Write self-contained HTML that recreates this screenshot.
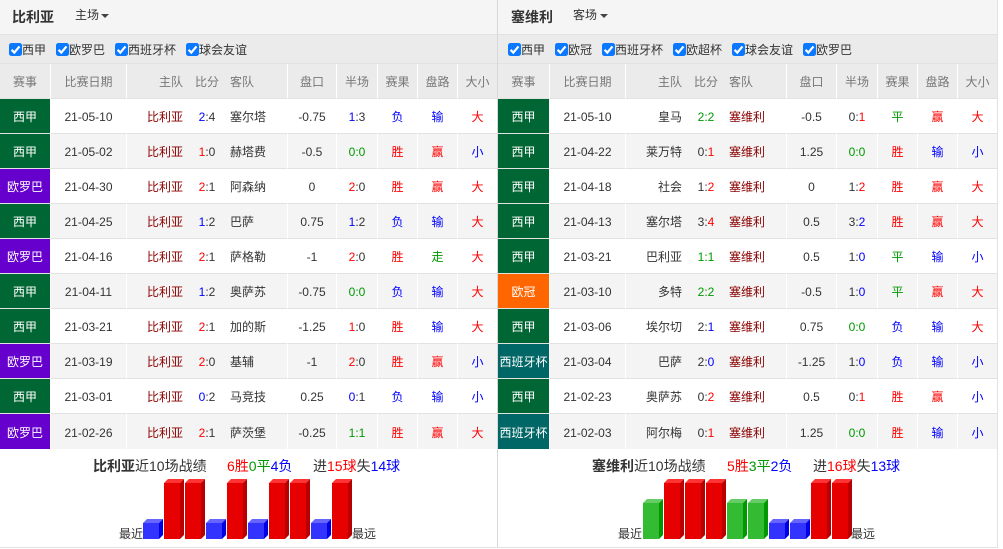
<!DOCTYPE html>
<html lang="zh-CN">
<head>
<meta charset="utf-8">
<title>近10场战绩</title>
<style>
html,body{margin:0;padding:0;background:#fff;}
body{width:1003px;height:549px;position:relative;overflow:hidden;font:12px/1 "Liberation Sans","Noto Sans CJK SC",sans-serif;color:#333;}
.abs{position:absolute;white-space:nowrap;}
.bg{position:absolute;}
table{position:absolute;top:64px;border-collapse:separate;border-spacing:0;table-layout:fixed;}
th,td{height:35px;box-sizing:border-box;padding:2px 0 0;text-align:center;font-weight:normal;border-bottom:1px solid #e2e2e2;white-space:nowrap;overflow:hidden;}
th{background:#ebebeb;color:#777;border-bottom-color:#e2e2e2;font-size:12px;}
.s{border-right:1px solid #fff;}
tr.e td{background:#f4f4f4;}
tr.l td{border-bottom:0;}
td.c{color:#fff;}
tr td.gr{background:#006633;}
tr td.pu{background:#6600cc;}
tr td.or{background:#ff6600;}
tr td.te{background:#006666;}
th.h,td.h{text-align:right;padding-right:12px;}
th.v,td.v{text-align:left;padding-left:11px;}
.t{color:#8b0000;}
.r{color:#f00;}
.b{color:#00f;}
.g{color:#090;}
.cb{position:absolute;top:43px;width:13px;height:13px;}
.lb{top:44px;color:#333;font-size:12px;}
.ti{font-size:14px;font-weight:bold;top:10px;color:#333;}
.sum{font-size:14px;top:459px;color:#333;}
.car{position:absolute;top:14px;width:0;height:0;border-left:4px solid transparent;border-right:4px solid transparent;border-top:4px solid #444;}
</style>
</head>
<body>
<div class="bg" style="left:0;top:0;width:997px;height:34px;background:#f5f5f5"></div>
<div class="bg" style="left:0;top:34px;width:997px;height:1px;background:#e2e2e2"></div>
<div class="bg" style="left:0;top:35px;width:997px;height:28px;background:#ebebeb"></div>
<div class="bg" style="left:0;top:63px;width:997px;height:1px;background:#e2e2e2"></div>
<div class="bg" style="left:497px;top:0;width:1px;height:548px;background:#d8d8d8"></div>
<div class="bg" style="left:997px;top:0;width:1px;height:548px;background:#e2e2e2"></div>
<div class="bg" style="left:0;top:547px;width:998px;height:1px;background:#e2e2e2"></div>

<span class="abs ti" style="left:12px">比利亚</span>
<span class="abs" style="left:75px;top:9px">主场</span><i class="car" style="left:101px"></i>
<span class="abs ti" style="left:511px">塞维利</span>
<span class="abs" style="left:573px;top:9px">客场</span><i class="car" style="left:600px"></i>

<svg width="0" height="0" style="position:absolute"><defs><g id="ck"><rect width="13" height="13" rx="2.5" fill="#0a78ff"/><path d="M2.6 6.8 L5.3 9.6 L10.5 3.4" fill="none" stroke="#fff" stroke-width="2.2"/></g></defs></svg>

<svg class="cb" style="left:9px" viewBox="0 0 13 13"><use href="#ck"/></svg><span class="abs lb" style="left:22px">西甲</span>
<svg class="cb" style="left:56px" viewBox="0 0 13 13"><use href="#ck"/></svg><span class="abs lb" style="left:69px">欧罗巴</span>
<svg class="cb" style="left:115px" viewBox="0 0 13 13"><use href="#ck"/></svg><span class="abs lb" style="left:128px">西班牙杯</span>
<svg class="cb" style="left:186px" viewBox="0 0 13 13"><use href="#ck"/></svg><span class="abs lb" style="left:199px">球会友谊</span>

<svg class="cb" style="left:508px" viewBox="0 0 13 13"><use href="#ck"/></svg><span class="abs lb" style="left:521px">西甲</span>
<svg class="cb" style="left:555px" viewBox="0 0 13 13"><use href="#ck"/></svg><span class="abs lb" style="left:568px">欧冠</span>
<svg class="cb" style="left:602px" viewBox="0 0 13 13"><use href="#ck"/></svg><span class="abs lb" style="left:615px">西班牙杯</span>
<svg class="cb" style="left:673px" viewBox="0 0 13 13"><use href="#ck"/></svg><span class="abs lb" style="left:686px">欧超杯</span>
<svg class="cb" style="left:732px" viewBox="0 0 13 13"><use href="#ck"/></svg><span class="abs lb" style="left:745px">球会友谊</span>
<svg class="cb" style="left:803px" viewBox="0 0 13 13"><use href="#ck"/></svg><span class="abs lb" style="left:816px">欧罗巴</span>

<table style="left:0;width:497px">
<colgroup><col style="width:51px"><col style="width:76px"><col style="width:68px"><col style="width:24px"><col style="width:69px"><col style="width:49px"><col style="width:41px"><col style="width:40px"><col style="width:40px"><col style="width:39px"></colgroup>
<tr><th class="s">赛事</th><th class="s">比赛日期</th><th class="h">主队</th><th>比分</th><th class="v s">客队</th><th class="s">盘口</th><th class="s">半场</th><th class="s">赛果</th><th class="s">盘路</th><th>大小</th></tr>
<tr><td class="c gr s">西甲</td><td class="s">21-05-10</td><td class="h t">比利亚</td><td><span class="b">2</span>:4</td><td class="v s">塞尔塔</td><td class="s">-0.75</td><td class="s"><span class="b">1</span>:3</td><td class="s b">负</td><td class="s b">输</td><td class="r">大</td></tr>
<tr class="e"><td class="c gr s">西甲</td><td class="s">21-05-02</td><td class="h t">比利亚</td><td><span class="r">1</span>:0</td><td class="v s">赫塔费</td><td class="s">-0.5</td><td class="s g">0:0</td><td class="s r">胜</td><td class="s r">赢</td><td class="b">小</td></tr>
<tr><td class="c pu s">欧罗巴</td><td class="s">21-04-30</td><td class="h t">比利亚</td><td><span class="r">2</span>:1</td><td class="v s">阿森纳</td><td class="s">0</td><td class="s"><span class="r">2</span>:0</td><td class="s r">胜</td><td class="s r">赢</td><td class="r">大</td></tr>
<tr class="e"><td class="c gr s">西甲</td><td class="s">21-04-25</td><td class="h t">比利亚</td><td><span class="b">1</span>:2</td><td class="v s">巴萨</td><td class="s">0.75</td><td class="s"><span class="b">1</span>:2</td><td class="s b">负</td><td class="s b">输</td><td class="r">大</td></tr>
<tr><td class="c pu s">欧罗巴</td><td class="s">21-04-16</td><td class="h t">比利亚</td><td><span class="r">2</span>:1</td><td class="v s">萨格勒</td><td class="s">-1</td><td class="s"><span class="r">2</span>:0</td><td class="s r">胜</td><td class="s g">走</td><td class="r">大</td></tr>
<tr class="e"><td class="c gr s">西甲</td><td class="s">21-04-11</td><td class="h t">比利亚</td><td><span class="b">1</span>:2</td><td class="v s">奥萨苏</td><td class="s">-0.75</td><td class="s g">0:0</td><td class="s b">负</td><td class="s b">输</td><td class="r">大</td></tr>
<tr><td class="c gr s">西甲</td><td class="s">21-03-21</td><td class="h t">比利亚</td><td><span class="r">2</span>:1</td><td class="v s">加的斯</td><td class="s">-1.25</td><td class="s"><span class="r">1</span>:0</td><td class="s r">胜</td><td class="s b">输</td><td class="r">大</td></tr>
<tr class="e"><td class="c pu s">欧罗巴</td><td class="s">21-03-19</td><td class="h t">比利亚</td><td><span class="r">2</span>:0</td><td class="v s">基辅</td><td class="s">-1</td><td class="s"><span class="r">2</span>:0</td><td class="s r">胜</td><td class="s r">赢</td><td class="b">小</td></tr>
<tr><td class="c gr s">西甲</td><td class="s">21-03-01</td><td class="h t">比利亚</td><td><span class="b">0</span>:2</td><td class="v s">马竞技</td><td class="s">0.25</td><td class="s"><span class="b">0</span>:1</td><td class="s b">负</td><td class="s b">输</td><td class="b">小</td></tr>
<tr class="e l"><td class="c pu s">欧罗巴</td><td class="s">21-02-26</td><td class="h t">比利亚</td><td><span class="r">2</span>:1</td><td class="v s">萨茨堡</td><td class="s">-0.25</td><td class="s g">1:1</td><td class="s r">胜</td><td class="s r">赢</td><td class="r">大</td></tr>
</table>

<table style="left:498px;width:499px">
<colgroup><col style="width:52px"><col style="width:76px"><col style="width:68px"><col style="width:24px"><col style="width:69px"><col style="width:50px"><col style="width:41px"><col style="width:40px"><col style="width:40px"><col style="width:39px"></colgroup>
<tr><th class="s">赛事</th><th class="s">比赛日期</th><th class="h">主队</th><th>比分</th><th class="v s">客队</th><th class="s">盘口</th><th class="s">半场</th><th class="s">赛果</th><th class="s">盘路</th><th>大小</th></tr>
<tr><td class="c gr s">西甲</td><td class="s">21-05-10</td><td class="h">皇马</td><td class="g">2:2</td><td class="v s t">塞维利</td><td class="s">-0.5</td><td class="s">0:<span class="r">1</span></td><td class="s g">平</td><td class="s r">赢</td><td class="r">大</td></tr>
<tr class="e"><td class="c gr s">西甲</td><td class="s">21-04-22</td><td class="h">莱万特</td><td>0:<span class="r">1</span></td><td class="v s t">塞维利</td><td class="s">1.25</td><td class="s g">0:0</td><td class="s r">胜</td><td class="s b">输</td><td class="b">小</td></tr>
<tr><td class="c gr s">西甲</td><td class="s">21-04-18</td><td class="h">社会</td><td>1:<span class="r">2</span></td><td class="v s t">塞维利</td><td class="s">0</td><td class="s">1:<span class="r">2</span></td><td class="s r">胜</td><td class="s r">赢</td><td class="r">大</td></tr>
<tr class="e"><td class="c gr s">西甲</td><td class="s">21-04-13</td><td class="h">塞尔塔</td><td>3:<span class="r">4</span></td><td class="v s t">塞维利</td><td class="s">0.5</td><td class="s">3:<span class="b">2</span></td><td class="s r">胜</td><td class="s r">赢</td><td class="r">大</td></tr>
<tr><td class="c gr s">西甲</td><td class="s">21-03-21</td><td class="h">巴利亚</td><td class="g">1:1</td><td class="v s t">塞维利</td><td class="s">0.5</td><td class="s">1:<span class="b">0</span></td><td class="s g">平</td><td class="s b">输</td><td class="b">小</td></tr>
<tr class="e"><td class="c or s">欧冠</td><td class="s">21-03-10</td><td class="h">多特</td><td class="g">2:2</td><td class="v s t">塞维利</td><td class="s">-0.5</td><td class="s">1:<span class="b">0</span></td><td class="s g">平</td><td class="s r">赢</td><td class="r">大</td></tr>
<tr><td class="c gr s">西甲</td><td class="s">21-03-06</td><td class="h">埃尔切</td><td>2:<span class="b">1</span></td><td class="v s t">塞维利</td><td class="s">0.75</td><td class="s g">0:0</td><td class="s b">负</td><td class="s b">输</td><td class="r">大</td></tr>
<tr class="e"><td class="c te s">西班牙杯</td><td class="s">21-03-04</td><td class="h">巴萨</td><td>2:<span class="b">0</span></td><td class="v s t">塞维利</td><td class="s">-1.25</td><td class="s">1:<span class="b">0</span></td><td class="s b">负</td><td class="s b">输</td><td class="b">小</td></tr>
<tr><td class="c gr s">西甲</td><td class="s">21-02-23</td><td class="h">奥萨苏</td><td>0:<span class="r">2</span></td><td class="v s t">塞维利</td><td class="s">0.5</td><td class="s">0:<span class="r">1</span></td><td class="s r">胜</td><td class="s r">赢</td><td class="b">小</td></tr>
<tr class="e l"><td class="c te s">西班牙杯</td><td class="s">21-02-03</td><td class="h">阿尔梅</td><td>0:<span class="r">1</span></td><td class="v s t">塞维利</td><td class="s">1.25</td><td class="s g">0:0</td><td class="s r">胜</td><td class="s b">输</td><td class="b">小</td></tr>
</table>

<span class="abs sum" style="left:93px"><b>比利亚</b>近10场战绩</span>
<span class="abs sum" style="left:227px"><span class="r">6胜</span><span class="g">0平</span><span class="b">4负</span></span>
<span class="abs sum" style="left:313px">进<span class="r">15球</span>失<span class="b">14球</span></span>
<span class="abs sum" style="left:592px"><b>塞维利</b>近10场战绩</span>
<span class="abs sum" style="left:727px"><span class="r">5胜</span><span class="g">3平</span><span class="b">2负</span></span>
<span class="abs sum" style="left:813px">进<span class="r">16球</span>失<span class="b">13球</span></span>

<span class="abs" style="left:119px;top:528px">最近</span>
<span class="abs" style="left:352px;top:528px">最远</span>
<span class="abs" style="left:618px;top:528px">最近</span>
<span class="abs" style="left:851px;top:528px">最远</span>

<svg width="1003" height="549" style="position:absolute;left:0;top:0;pointer-events:none">
<defs>
<g id="B"><rect x="0" y="-16" width="16" height="16" fill="#3333ff"/><polygon points="0,-16 4,-20 20,-20 16,-16" fill="#6666ff"/><polygon points="16,-16 20,-20 20,-4 16,0" fill="#0000e6"/></g>
<g id="R"><rect x="0" y="-56" width="16" height="56" fill="#e60000"/><polygon points="0,-56 4,-60 20,-60 16,-56" fill="#ff3333"/><polygon points="16,-56 20,-60 20,-4 16,0" fill="#b80000"/></g>
<g id="G"><rect x="0" y="-36" width="16" height="36" fill="#33bb33"/><polygon points="0,-36 4,-40 20,-40 16,-36" fill="#66cc66"/><polygon points="16,-36 20,-40 20,-4 16,0" fill="#009900"/></g>
</defs>
<use href="#B" x="143" y="539"/><use href="#R" x="164" y="539"/><use href="#R" x="185" y="539"/><use href="#B" x="206" y="539"/><use href="#R" x="227" y="539"/><use href="#B" x="248" y="539"/><use href="#R" x="269" y="539"/><use href="#R" x="290" y="539"/><use href="#B" x="311" y="539"/><use href="#R" x="332" y="539"/>
<use href="#G" x="643" y="539"/><use href="#R" x="664" y="539"/><use href="#R" x="685" y="539"/><use href="#R" x="706" y="539"/><use href="#G" x="727" y="539"/><use href="#G" x="748" y="539"/><use href="#B" x="769" y="539"/><use href="#B" x="790" y="539"/><use href="#R" x="811" y="539"/><use href="#R" x="832" y="539"/>
</svg>
</body>
</html>
